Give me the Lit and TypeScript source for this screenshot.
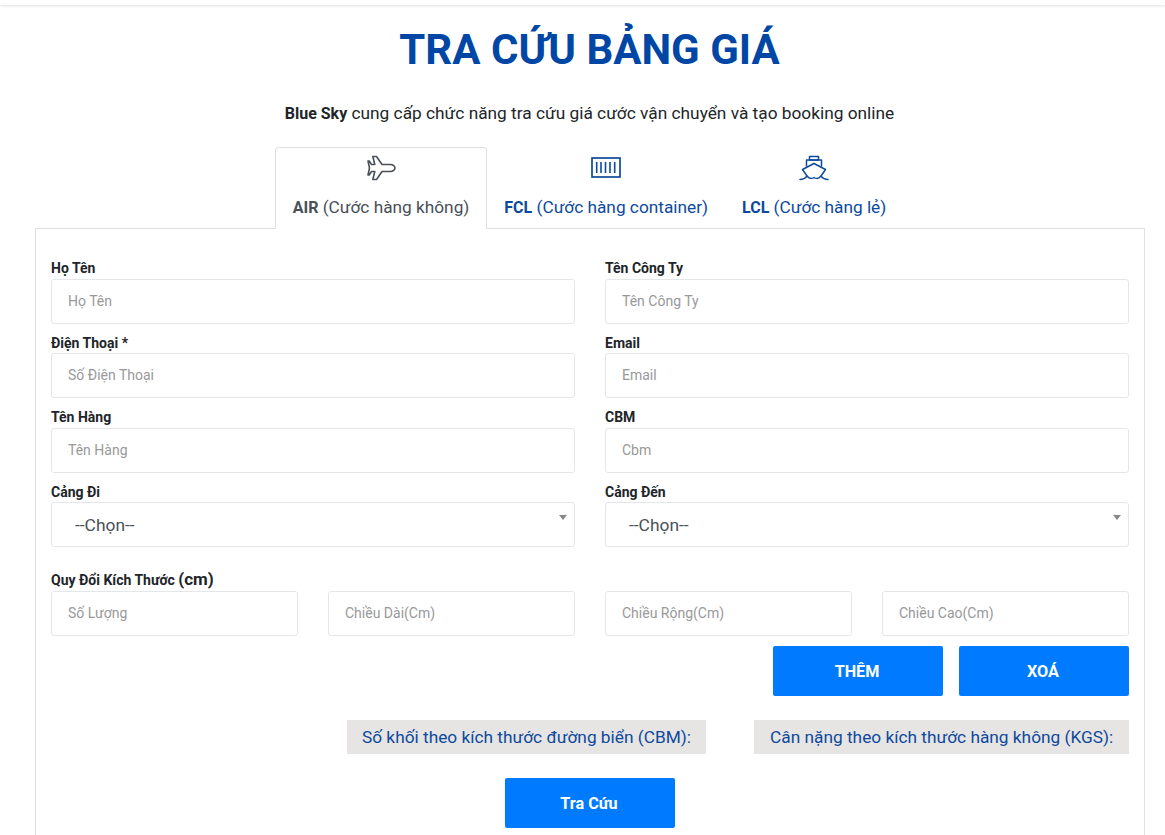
import { LitElement, html, css, svg } from "lit";
import { customElement } from "lit/decorators.js";

const plane = svg`<path d="M29 13 C29 14.5 27 16.5 24.5 16.5 L16 16.5 L10.5 24.5 L6.8 24.5 L8.8 16.5 L5.5 16.5 L3.2 20 L2 20 L3.5 13 L2 6 L3.2 6 L5.5 9.5 L8.8 9.5 L6.8 1.5 L10.5 1.5 L16 9.5 L24.5 9.5 C27 9.5 29 11.5 29 13 Z" fill="none" stroke="currentColor" stroke-width="1.6" stroke-linejoin="round"/>`;
const box = svg`<rect x="1" y="3" width="28" height="19" fill="none" stroke="currentColor" stroke-width="1.7"/><path d="M5.7 7V18M10 7V18M14.5 7V18M19 7V18M23.7 7V18" stroke="currentColor" stroke-width="1.6"/>`;
const ship = svg`<g fill="none" stroke="currentColor" stroke-width="1.5" stroke-linejoin="round" stroke-linecap="round"><path d="M10.5 1.5H19.5V5H10.5Z"/><path d="M7.5 11V5H22.5V11"/><path d="M15 8.5L26.5 14.5L22 21C20 23.5 17 24 15 22.5C13 24 10 23.5 8 21L3.5 14.5Z"/><path d="M1 24.5C4 24.5 6 23.5 8 21M29 24.5C26 24.5 24 23.5 22 21"/></g>`;

@customElement("app-root")
export class AppRoot extends LitElement {
  static styles = css`
    :host { display: block; height: 835px; overflow: hidden; background: #fff; font-family: Roboto, "Noto Sans", sans-serif; color: #212529; position: relative; }
    .topbar { height: 5px; box-shadow: 0 1px 3px rgba(0,0,0,.12); background: #fff; }
    .wrap { width: 1110px; margin-left: 35px; }
    h1 { margin: 0; padding: 20px 1px 0 0; height: 50px; line-height: 50px; text-align: center; font-size: 42px; font-weight: 700; color: #0047a5; box-sizing: content-box; }
    .intro { margin: 0; padding: 26px 1px 0 0; line-height: 24px; font-size: 17.3px; text-align: center; color: #212529; height: 24px; }
    .intro b { font-weight: 700; font-size: 16px; }
    .tabs { display: flex; justify-content: center; margin-top: 22px; height: 82px; position: relative; z-index: 1; padding-right: 2px; }
    .tab { display: flex; flex-direction: column; align-items: center; padding: 0 16px; color: #0d4a9c; font-size: 17.25px; border: 1px solid transparent; border-bottom: 0; border-radius: 4px 4px 0 0; box-sizing: border-box; height: 82px; }
    .tab b { font-size: 16px; }
    .tab.on { color: #495057; background: #fff; border-color: #dee2e6; padding: 0 17px; }
    .tab svg { display: block; margin-top: 7px; width: 30px; height: 26px; }
    .tab span { display: block; margin-top: 14px; line-height: 24px; white-space: nowrap; }
    .panel { border: 1px solid #dee2e6; margin-top: -1px; padding: 29.1px 15px 60px; box-sizing: border-box; }
    .grid { display: grid; grid-template-columns: 524px 524px; column-gap: 30px; row-gap: 8.7px; }
    label { display: block; font-size: 14px; font-weight: 700; line-height: 20.8px; color: #212529; white-space: nowrap; }
    label em { font-style: normal; font-size: 17px; }
    .input { height: 45px; border: 1px solid #e4e7ea; border-radius: 3px; box-sizing: border-box; padding: 0 16px 0.9px; display: flex; align-items: center; font-size: 14px; color: #999; background: #fff; }
    .select { position: relative; font-size: 17.4px; color: #495057; padding-left: 23px; padding-bottom: 0; }
    .select::after { content: ""; position: absolute; right: 7px; top: 12px; border: 4px solid transparent; border-top: 5px solid #888; border-bottom: 0; }
    .dims-label { margin-top: 22.1px; height: 21.2px; }
    .dims { display: grid; grid-template-columns: repeat(4, 247px); column-gap: 30px; }
    .actions { display: flex; justify-content: flex-end; gap: 16px; margin-top: 10px; }
    .btn { width: 170px; height: 50px; background: #007bff; color: #fff; font-weight: 700; font-size: 16.2px; border-radius: 2px; display: flex; align-items: center; justify-content: center; border: 0; font-family: inherit; padding: 1px 2px 0 0; }
    .results { display: flex; justify-content: flex-end; gap: 48px; margin-top: 24px; }
    .result { height: 34px; line-height: 35px; background: #e7e4e4; color: #0d4a9c; font-size: 17.3px; padding: 0 15px; white-space: nowrap; }
    .result.wide { padding: 0 15px 0 16px; min-width: 375px; box-sizing: border-box; }
    .search { display: flex; justify-content: center; margin-top: 24px; }
  `;

  private field(name: string, ph = name) {
    return html`<div><label>${name}</label><div class="input">${ph}</div></div>`;
  }
  private sel(name: string) {
    return html`<div><label>${name}</label><div class="input select">--Chọn--</div></div>`;
  }

  render() {
    return html`
      <div class="topbar"></div>
      <div class="wrap">
        <h1>TRA CỨU BẢNG GIÁ</h1>
        <p class="intro"><b>Blue Sky</b> cung cấp chức năng tra cứu giá cước vận chuyển và tạo booking online</p>
        <div class="tabs">
          <div class="tab on"><svg viewBox="0 0 30 26">${plane}</svg><span><b>AIR</b> (Cước hàng không)</span></div>
          <div class="tab"><svg viewBox="0 0 30 26">${box}</svg><span><b>FCL</b> (Cước hàng container)</span></div>
          <div class="tab"><svg viewBox="0 0 30 26">${ship}</svg><span><b>LCL</b> (Cước hàng lẻ)</span></div>
        </div>
        <div class="panel">
          <div class="grid">
            ${this.field("Họ Tên")}
            ${this.field("Tên Công Ty")}
            ${this.field("Điện Thoại *", "Số Điện Thoại")}
            ${this.field("Email")}
            ${this.field("Tên Hàng")}
            ${this.field("CBM", "Cbm")}
            ${this.sel("Cảng Đi")}
            ${this.sel("Cảng Đến")}
          </div>
          <label class="dims-label">Quy Đổi Kích Thước <em>(cm)</em></label>
          <div class="dims">
            <div class="input">Số Lượng</div>
            <div class="input">Chiều Dài(Cm)</div>
            <div class="input">Chiều Rộng(Cm)</div>
            <div class="input">Chiều Cao(Cm)</div>
          </div>
          <div class="actions">
            <button class="btn">THÊM</button>
            <button class="btn">XOÁ</button>
          </div>
          <div class="results">
            <div class="result">Số khối theo kích thước đường biển (CBM):</div>
            <div class="result wide">Cân nặng theo kích thước hàng không (KGS):</div>
          </div>
          <div class="search"><button class="btn">Tra Cứu</button></div>
        </div>
      </div>
    `;
  }
}
